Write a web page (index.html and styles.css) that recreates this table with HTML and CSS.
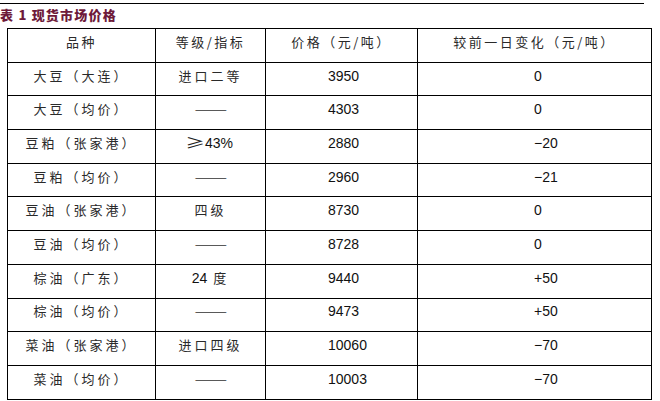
FILE: index.html
```html
<!DOCTYPE html>
<html lang="zh">
<head>
<meta charset="utf-8">
<link rel="stylesheet" href="styles.css">
</head>
<body>
<div class="rule"></div>
<div class="title">表 1 现货市场价格</div>
<table class="prices">
  <colgroup>
    <col class="c1"><col class="c2"><col class="c3"><col class="c4">
  </colgroup>
  <tr class="head">
    <td>品种</td><td>等级/指标</td><td>价格（元/吨）</td><td>较前一日变化（元/吨）</td>
  </tr>
  <tr><td>大豆（大连）</td><td>进口二等</td><td class="num">3950</td><td class="chg">0</td></tr>
  <tr><td>大豆（均价）</td><td><span class="dash">——</span></td><td class="num">4303</td><td class="chg">0</td></tr>
  <tr><td>豆粕（张家港）</td><td><span class="ge">≥</span><span class="lat">43%</span></td><td class="num">2880</td><td class="chg">−20</td></tr>
  <tr><td>豆粕（均价）</td><td><span class="dash">——</span></td><td class="num">2960</td><td class="chg">−21</td></tr>
  <tr><td>豆油（张家港）</td><td>四级</td><td class="num">8730</td><td class="chg">0</td></tr>
  <tr><td>豆油（均价）</td><td><span class="dash">——</span></td><td class="num">8728</td><td class="chg">0</td></tr>
  <tr><td>棕油（广东）</td><td><span class="lat">24</span> 度</td><td class="num">9440</td><td class="chg">+50</td></tr>
  <tr><td>棕油（均价）</td><td><span class="dash">——</span></td><td class="num">9473</td><td class="chg">+50</td></tr>
  <tr><td>菜油（张家港）</td><td>进口四级</td><td class="num">10060</td><td class="chg">−70</td></tr>
  <tr><td>菜油（均价）</td><td><span class="dash">——</span></td><td class="num">10003</td><td class="chg">−70</td></tr>
</table>
</body>
</html>
```
FILE: styles.css
```css
html, body {
  margin: 0;
  padding: 0;
  background: #fff;
}
body {
  width: 660px;
  height: 401px;
  overflow: hidden;
  font-family: "Noto Sans CJK SC", "Liberation Sans", sans-serif;
}
.rule {
  width: 644px;
  margin-top: 3px;
  border-top: 1px solid #000;
}
.title {
  margin-top: 3px;
  height: 21px;
  line-height: 16px;
  font-size: 13px;
  font-weight: 900;
  color: #6e1a3a;
  letter-spacing: 1.2px;
}
.prices {
  margin-left: 7px;
  width: 644px;
  border-collapse: collapse;
  table-layout: fixed;
}
.c1 { width: 148px; }
.c2 { width: 110px; }
.c3 { width: 152px; }
.c4 { width: 234px; }
.prices tr {
  height: 33.7px;
}
.prices td {
  border: 1px solid #000;
  padding: 0 0 7px 0;
  text-align: center;
  vertical-align: middle;
  font-family: "Noto Sans CJK SC", sans-serif;
  font-size: 13px;
  font-weight: 400;
  letter-spacing: 3px;
  color: #2a2a2a;
  line-height: 18px;
  white-space: nowrap;
}
.prices .head td {
  letter-spacing: 2.5px;
}
.prices td.num,
.prices td.chg,
.prices .lat {
  font-family: "Liberation Sans", Arial, sans-serif;
  font-size: 14px;
  letter-spacing: 0;
  color: #111;
}
.prices td.num {
  text-align: left;
  padding-left: 62px;
}
.prices td.chg {
  text-align: left;
  padding-left: 116px;
}
.prices .dash {
  display: inline-block;
  letter-spacing: 0;
  color: #333;
  transform: scaleX(1.5);
}
.prices .ge {
  display: inline-block;
  letter-spacing: 0;
  font-size: 14px;
  transform: scaleX(1.4);
  margin-right: 3px;
  color: #222;
}
```
